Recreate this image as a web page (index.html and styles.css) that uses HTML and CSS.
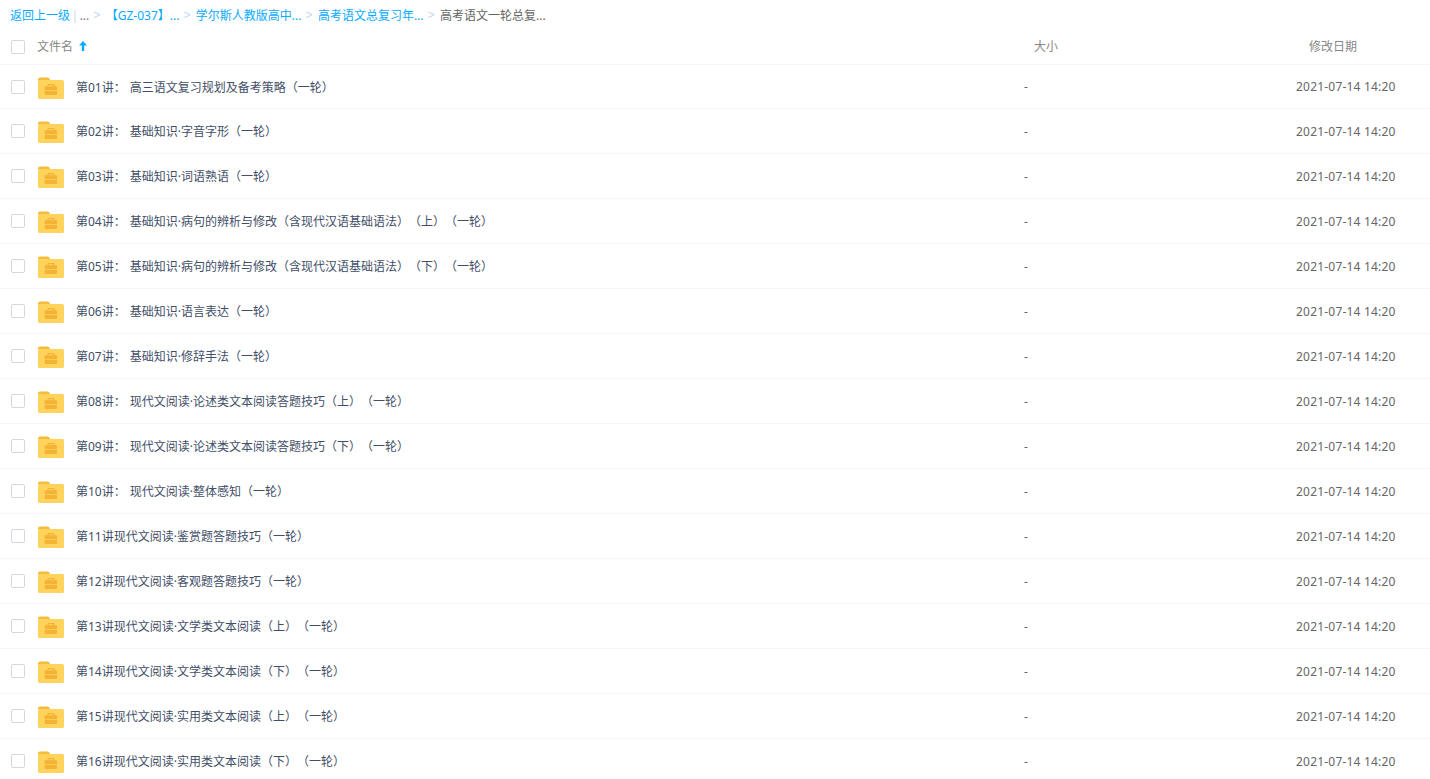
FILE: index.html
```html
<!DOCTYPE html>
<html lang="zh-CN">
<head>
<meta charset="utf-8">
<title>文件列表</title>
<link rel="stylesheet" href="styles.css">
</head>
<body>
<svg class="defs" width="0" height="0" aria-hidden="true">
  <symbol id="folder" viewBox="0 0 26 22">
    <path d="M0 2.500A2 2 0 0 1 2 .5h7.500a2 2 0 0 1 1.600.8L12.500 3.500H0z" fill="#f5bb3d"/>
    <rect x="0" y="3" width="26" height="19" rx="1.500" fill="#ffd35c"/>
    <path d="M9.500 9.300V8a1 1 0 0 1 1-1h5a1 1 0 0 1 1 1v1.300h1.800a.7.7 0 0 1 .7.7v3H6.700v-3a.7.7 0 0 1 .7-.7zM10.700 9.300h4.600V8.200h-4.600z" fill="#f5b335" fill-rule="evenodd"/>
    <path d="M6.700 13.700H19v3.600a.7.7 0 0 1-.7.7H7.400a.7.7 0 0 1-.7-.7z" fill="#f5b335"/>
  </symbol>
</svg>
<nav class="crumbs">
  <a class="link" href="#">返回上一级</a><span class="pipe">|</span><span class="muted">...</span><span class="sep">&gt;</span><a class="link" href="#">【GZ-037】...</a><span class="sep">&gt;</span><a class="link" href="#">学尔斯人教版高中...</a><span class="sep">&gt;</span><a class="link" href="#">高考语文总复习年...</a><span class="sep">&gt;</span><span class="current">高考语文一轮总复...</span>
</nav>
<div class="head row-grid">
  <span class="check"></span>
  <div class="head-name">文件名
    <svg class="arrow" width="8" height="10" viewBox="0 0 8 10"><path d="M4 0 8 4.500H5.200V10H2.800V4.500H0z" fill="#09aaff"/></svg>
  </div>
  <div class="head-size">大小</div>
  <div class="head-date">修改日期</div>
</div>
<ul class="list">
  <li class="row row-grid"><span class="check"></span><svg class="folder"><use href="#folder"/></svg><span class="name">第01讲： 高三语文复习规划及备考策略（一轮）</span><span class="size">-</span><span class="date">2021-07-14 14:20</span></li>
  <li class="row row-grid"><span class="check"></span><svg class="folder"><use href="#folder"/></svg><span class="name">第02讲： 基础知识·字音字形（一轮）</span><span class="size">-</span><span class="date">2021-07-14 14:20</span></li>
  <li class="row row-grid"><span class="check"></span><svg class="folder"><use href="#folder"/></svg><span class="name">第03讲： 基础知识·词语熟语（一轮）</span><span class="size">-</span><span class="date">2021-07-14 14:20</span></li>
  <li class="row row-grid"><span class="check"></span><svg class="folder"><use href="#folder"/></svg><span class="name">第04讲： 基础知识·病句的辨析与修改（含现代汉语基础语法）（上）（一轮）</span><span class="size">-</span><span class="date">2021-07-14 14:20</span></li>
  <li class="row row-grid"><span class="check"></span><svg class="folder"><use href="#folder"/></svg><span class="name">第05讲： 基础知识·病句的辨析与修改（含现代汉语基础语法）（下）（一轮）</span><span class="size">-</span><span class="date">2021-07-14 14:20</span></li>
  <li class="row row-grid"><span class="check"></span><svg class="folder"><use href="#folder"/></svg><span class="name">第06讲： 基础知识·语言表达（一轮）</span><span class="size">-</span><span class="date">2021-07-14 14:20</span></li>
  <li class="row row-grid"><span class="check"></span><svg class="folder"><use href="#folder"/></svg><span class="name">第07讲： 基础知识·修辞手法（一轮）</span><span class="size">-</span><span class="date">2021-07-14 14:20</span></li>
  <li class="row row-grid"><span class="check"></span><svg class="folder"><use href="#folder"/></svg><span class="name">第08讲： 现代文阅读·论述类文本阅读答题技巧（上）（一轮）</span><span class="size">-</span><span class="date">2021-07-14 14:20</span></li>
  <li class="row row-grid"><span class="check"></span><svg class="folder"><use href="#folder"/></svg><span class="name">第09讲： 现代文阅读·论述类文本阅读答题技巧（下）（一轮）</span><span class="size">-</span><span class="date">2021-07-14 14:20</span></li>
  <li class="row row-grid"><span class="check"></span><svg class="folder"><use href="#folder"/></svg><span class="name">第10讲： 现代文阅读·整体感知（一轮）</span><span class="size">-</span><span class="date">2021-07-14 14:20</span></li>
  <li class="row row-grid"><span class="check"></span><svg class="folder"><use href="#folder"/></svg><span class="name">第11讲现代文阅读·鉴赏题答题技巧（一轮）</span><span class="size">-</span><span class="date">2021-07-14 14:20</span></li>
  <li class="row row-grid"><span class="check"></span><svg class="folder"><use href="#folder"/></svg><span class="name">第12讲现代文阅读·客观题答题技巧（一轮）</span><span class="size">-</span><span class="date">2021-07-14 14:20</span></li>
  <li class="row row-grid"><span class="check"></span><svg class="folder"><use href="#folder"/></svg><span class="name">第13讲现代文阅读·文学类文本阅读（上）（一轮）</span><span class="size">-</span><span class="date">2021-07-14 14:20</span></li>
  <li class="row row-grid"><span class="check"></span><svg class="folder"><use href="#folder"/></svg><span class="name">第14讲现代文阅读·文学类文本阅读（下）（一轮）</span><span class="size">-</span><span class="date">2021-07-14 14:20</span></li>
  <li class="row row-grid"><span class="check"></span><svg class="folder"><use href="#folder"/></svg><span class="name">第15讲现代文阅读·实用类文本阅读（上）（一轮）</span><span class="size">-</span><span class="date">2021-07-14 14:20</span></li>
  <li class="row row-grid"><span class="check"></span><svg class="folder"><use href="#folder"/></svg><span class="name">第16讲现代文阅读·实用类文本阅读（下）（一轮）</span><span class="size">-</span><span class="date">2021-07-14 14:20</span></li>
</ul>
</body>
</html>
```
FILE: styles.css
```css
* { box-sizing: border-box; }
html, body { margin: 0; padding: 0; height: 779px; overflow: hidden; background: #fff; }
body {
  font-family: "Noto Sans", "Noto Sans CJK SC", sans-serif;
  font-size: 12px;
  color: #666;
  text-spacing-trim: space-all;
}
.defs { display: block; height: 0; }
.crumbs {
  display: flex;
  align-items: center;
  height: 30px;
  padding-left: 10px;
  white-space: nowrap;
}
.link { color: #09aaff; text-decoration: none; }
.pipe { color: #c4d8f4; margin: 0 1.5px 0 1.5px; }
.muted { color: #777; }
.sep { color: #c4d8f4; margin: 0 5.4px 0 4px; font-family: "Liberation Sans", sans-serif; }
.current { color: #666; }
.row-grid {
  display: grid;
  align-items: center;
  padding-left: 11px;
}
.head {
  grid-template-columns: 26px 997px 275px 1fr;
  height: 35px;
  border-bottom: 1px solid #f2f6fd;
  color: #888;
}
.head-name { display: flex; align-items: center; gap: 6px; margin-bottom: 2px; }
.head-size, .head-date { margin-bottom: 2px; }
.check {
  display: block;
  width: 14px;
  height: 14px;
  border: 1px solid #d4d7de;
  border-radius: 2px;
  background: #fff;
}
.list { list-style: none; margin: 0; padding: 0; }
.row {
  grid-template-columns: 27px 38px 948px 272px 1fr;
  height: 45px;
  border-bottom: 1px solid #f2f6fd;
  color: #424e67;
}
.row:first-child { height: 44px; }
.folder { width: 26px; height: 22px; display: block; margin-top: 2px; }
.name { white-space: nowrap; word-spacing: 1px; }
.size { color: #666; }
.date { color: #666; letter-spacing: .2px; }
```
